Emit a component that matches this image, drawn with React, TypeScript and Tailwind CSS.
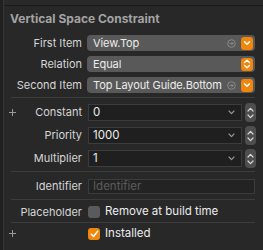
import React from "react";

const font = { fontFamily: "Inter, 'Liberation Sans', sans-serif" };

function Label({ children }: { children: React.ReactNode }) {
  return (
    <div className="w-[83px] shrink-0 pr-[5px] text-right text-[11px] leading-none text-[#d6d6d6]">
      {children}
    </div>
  );
}

function OrangeBox({ updown }: { updown?: boolean }) {
  return (
    <div className="flex h-[13px] w-[12px] items-center justify-center rounded-[3px] bg-[#f0860c]">
      {updown ? (
        <svg width="8" height="10" viewBox="0 0 8 10" fill="none" stroke="white" strokeWidth="1.4" strokeLinecap="round" strokeLinejoin="round">
          <path d="M1.5 3.5 L4 1.2 L6.5 3.5" />
          <path d="M1.5 6.5 L4 8.8 L6.5 6.5" />
        </svg>
      ) : (
        <svg width="8" height="6" viewBox="0 0 8 6" fill="none" stroke="white" strokeWidth="1.5" strokeLinecap="round" strokeLinejoin="round">
          <path d="M1.5 1.8 L4 4.2 L6.5 1.8" />
        </svg>
      )}
    </div>
  );
}

function CircleArrow() {
  return (
    <svg width="9" height="9" viewBox="0 0 9 9" fill="none" stroke="#8e8e8e" strokeWidth="0.9">
      <circle cx="4.5" cy="4.5" r="3.8" />
      <path d="M3 4.5 H6 M4.7 3.2 L6 4.5 L4.7 5.8" strokeLinecap="round" strokeLinejoin="round" />
    </svg>
  );
}

function Popup({ text, circle, updown }: { text: string; circle?: boolean; updown?: boolean }) {
  return (
    <div className="relative flex h-[16px] w-[168px] items-center rounded-[4px] bg-[#595959] pl-[6px] pr-[2px]">
      <span className="flex-1 whitespace-nowrap text-[11px] leading-none tracking-[-0.1px] text-[#ececec]">{text}</span>
      {circle && (
        <div className="absolute right-[19px] top-[3.5px] flex">
          <CircleArrow />
        </div>
      )}
      <OrangeBox updown={updown} />
    </div>
  );
}

function NumField({ value }: { value: string }) {
  return (
    <div className="ml-px flex items-center">
      <div className="flex h-[17px] w-[154px] items-center border border-[#3c3c3c] bg-[#1f1f1f] pl-[4px] pr-[6px]">
        <span className="flex-1 text-[11.5px] leading-none text-[#ececec]">{value}</span>
        <svg width="7" height="5" viewBox="0 0 7 5" fill="none" stroke="#9a9a9a" strokeWidth="1.1" strokeLinecap="round" strokeLinejoin="round">
          <path d="M1 1 L3.5 3.6 L6 1" />
        </svg>
      </div>
      <div className="ml-[3px] flex h-[19px] w-[11px] flex-col items-center justify-center gap-[2px] rounded-[4px] bg-[#4e4e4e]">
        <svg width="7" height="5" viewBox="0 0 7 5" fill="none" stroke="#d8d8d8" strokeWidth="1.2" strokeLinecap="round" strokeLinejoin="round">
          <path d="M1 4 L3.5 1.4 L6 4" />
        </svg>
        <svg width="7" height="5" viewBox="0 0 7 5" fill="none" stroke="#d8d8d8" strokeWidth="1.2" strokeLinecap="round" strokeLinejoin="round">
          <path d="M1 1 L3.5 3.6 L6 1" />
        </svg>
      </div>
    </div>
  );
}

function Plus() {
  return (
    <svg width="7" height="7" viewBox="0 0 7 7" stroke="#9a9a9a" strokeWidth="1">
      <path d="M3.5 0 V7 M0 3.5 H7" />
    </svg>
  );
}

function Sep() {
  return <div className="ml-[7px] mr-[8px] h-px bg-[#3d3d3d]" />;
}

export default function App() {
  return (
    <div style={font} className="flex h-[250px] w-[263px] overflow-hidden bg-[#1e1e1e]">
      <div className="w-[3px] shrink-0 bg-[#202020]" />
      <div className="flex w-[260px] flex-col border-l border-[#353535] bg-[#282828]">
        <div className="h-[6px] border-b border-[#1a1a1a] bg-[#2a2a2a]" />
        <div className="ml-[6px] mt-[6px] h-[13px] text-[12px] font-bold leading-[13px] text-[#a3a3a3]">
          Vertical Space Constraint
        </div>
        <div className="mt-[10px] flex h-[16px] items-center">
          <Label>First Item</Label>
          <Popup text="View.Top" circle />
        </div>
        <div className="mt-[5px] flex h-[16px] items-center">
          <Label>Relation</Label>
          <Popup text="Equal" updown />
        </div>
        <div className="mt-[5px] flex h-[16px] items-center">
          <Label>Second Item</Label>
          <Popup text="Top Layout Guide.Bottom" circle />
        </div>
        <div className="mt-[4px]">
          <Sep />
        </div>
        <div className="relative mt-[5px] flex h-[19px] items-center">
          <div className="absolute left-[5px] top-[6px] flex">
            <Plus />
          </div>
          <Label>Constant</Label>
          <NumField value="0" />
        </div>
        <div className="mt-[4px] flex h-[19px] items-center">
          <Label>Priority</Label>
          <NumField value="1000" />
        </div>
        <div className="mt-[4px] flex h-[19px] items-center">
          <Label>Multiplier</Label>
          <NumField value="1" />
        </div>
        <div className="mt-[3px]">
          <Sep />
        </div>
        <div className="mt-[7px] flex h-[15px] items-center">
          <Label>Identifier</Label>
          <div className="ml-px flex h-[15px] w-[167px] items-center border border-[#3c3c3c] bg-[#232323] pl-[4px]">
            <span className="text-[11.5px] leading-none text-[#5c5c5c]">Identifier</span>
          </div>
        </div>
        <div className="mt-[5px]">
          <Sep />
        </div>
        <div className="mt-[6px] flex h-[12px] items-center">
          <Label>Placeholder</Label>
          <div className="ml-px h-[12px] w-[12px] rounded-[3px] bg-[#5a5a5a]" />
          <span className="ml-[5px] text-[11.5px] leading-none text-[#ececec]">Remove at build time</span>
        </div>
        <div className="mt-[4px]">
          <Sep />
        </div>
        <div className="relative mt-[5px] flex h-[12px] items-center">
          <div className="absolute left-[5px] top-[2px] flex">
            <Plus />
          </div>
          <Label> </Label>
          <div className="ml-px flex h-[12px] w-[12px] items-center justify-center rounded-[3px] bg-[#f0860c]">
            <svg width="9" height="8" viewBox="0 0 9 8" fill="none" stroke="white" strokeWidth="1.6" strokeLinecap="round" strokeLinejoin="round">
              <path d="M1.3 4.2 L3.5 6.4 L7.7 1.3" />
            </svg>
          </div>
          <span className="ml-[5px] text-[11.5px] leading-none text-[#ececec]">Installed</span>
        </div>
      </div>
    </div>
  );
}
